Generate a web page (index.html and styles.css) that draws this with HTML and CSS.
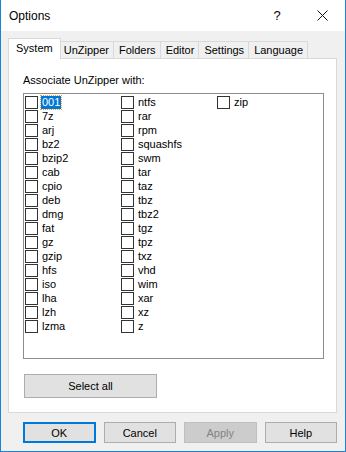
FILE: index.html
```html
<!DOCTYPE html>
<html lang="en">
<head>
    <meta charset="UTF-8">
    <title>Options</title>
    <link rel="stylesheet" href="styles.css">
</head>
<body>
    <div class="window">
        <div class="titlebar">
            <span class="title">Options</span>
            <span class="help-btn">?</span>
            <span class="close-btn">
                <svg width="11" height="11" viewBox="0 0 11 11"><path d="M0.5 0.5 L10.5 10.5 M10.5 0.5 L0.5 10.5" stroke="#111" stroke-width="1" fill="none"/></svg>
            </span>
        </div>

        <div class="content">
            <div class="tabs">
                <div class="tab active">System</div>
                <div class="tab">UnZipper</div>
                <div class="tab">Folders</div>
                <div class="tab">Editor</div>
                <div class="tab">Settings</div>
                <div class="tab">Language</div>
            </div>

            <div class="panel">
                <div class="label">Associate UnZipper with:</div>
                <div class="listbox">
                    <div class="list-grid" id="listGrid"></div>
                </div>
                <button class="btn select-all">Select all</button>
            </div>

            <div class="dialog-buttons">
                <button class="btn default">OK</button>
                <button class="btn">Cancel</button>
                <button class="btn" disabled>Apply</button>
                <button class="btn">Help</button>
            </div>
        </div>
    </div>

    <script>
        const types = ["001", "7z", "arj", "bz2", "bzip2", "cab", "cpio", "deb", "dmg", "fat", "gz", "gzip", "hfs", "iso", "lha", "lzh", "lzma",
            "ntfs", "rar", "rpm", "squashfs", "swm", "tar", "taz", "tbz", "tbz2", "tgz", "tpz", "txz", "vhd", "wim", "xar", "xz", "z",
            "zip"];
        const listGrid = document.getElementById("listGrid");

        types.forEach((name, index) => {
            const row = document.createElement("div");
            row.className = "item";
            row.innerHTML = `<span class="check"></span><span class="name${index === 0 ? " selected" : ""}">${name}</span>`;
            listGrid.appendChild(row);
        });
    </script>
</body>
</html>
```

FILE: styles.css
```css
body {
    margin: 0;
    font-family: "Liberation Sans", Arial, sans-serif;
    font-size: 11px;
    color: #000;
    background: #fff;
}

.window {
    width: 346px;
    height: 452px;
    box-sizing: border-box;
    border: 1px solid #1883d7;
    border-top: none;
    background: #f0f0f0;
    display: flex;
    flex-direction: column;
}

.titlebar {
    height: 31px;
    background: #ffffff;
    display: flex;
    align-items: center;
    padding-left: 8px;
    flex-shrink: 0;
}

.title {
    font-size: 12px;
    flex: 1;
}

.help-btn {
    font-size: 13px;
    width: 46px;
    text-align: center;
    margin-right: -1px;
}

.close-btn {
    width: 46px;
    display: flex;
    justify-content: center;
    align-items: center;
}

.content {
    padding: 7px 8px 0 7px;
}

.tabs {
    display: flex;
    align-items: flex-end;
    height: 20px;
    padding-left: 2px;
}

.tab {
    height: 17px;
    line-height: 16px;
    padding: 0 4px 0 5px;
    border: 1px solid #d9d9d9;
    border-bottom: none;
    margin-left: -1px;
    box-sizing: border-box;
    background: #f0f0f0;
    position: relative;
}

.tab.active {
    height: 21px;
    line-height: 18px;
    margin: 0 -2px -1px -2px;
    padding: 0 7px;
    background: #ffffff;
    z-index: 1;
}

.panel {
    height: 355px;
    box-sizing: border-box;
    border: 1px solid #d9d9d9;
    background: #ffffff;
    padding: 15px 0 0 14px;
}

.label {
    line-height: 13px;
    margin-bottom: 6px;
}

.listbox {
    width: 301px;
    height: 266px;
    box-sizing: border-box;
    border: 1px solid #8c8c8c;
    padding: 2px 1px;
}

.list-grid {
    display: grid;
    grid-auto-flow: column;
    grid-template-rows: repeat(17, 14px);
    grid-template-columns: repeat(3, 96px);
}

.item {
    display: flex;
    align-items: flex-start;
    height: 14px;
}

.check {
    width: 13px;
    height: 13px;
    box-sizing: border-box;
    border: 1px solid #333333;
    background: #ffffff;
    flex-shrink: 0;
}

.name {
    margin-left: 3px;
    padding: 0 1px;
    line-height: 13px;
    height: 13px;
}

.name.selected {
    background: #0078d7;
    color: #ffffff;
    outline: 1px dotted #e8a040;
}

.btn {
    font-family: inherit;
    font-size: 11px;
    color: #000;
    background: #e1e1e1;
    border: 1px solid #adadad;
    padding: 0;
    box-sizing: border-box;
}

.select-all {
    width: 133px;
    height: 24px;
    margin: 15px 0 0 1px;
}

.dialog-buttons {
    display: flex;
    gap: 8px;
    margin: 9px 0 0 15px;
}

.dialog-buttons .btn {
    width: 73px;
    height: 21px;
}

.btn.default {
    border: 2px solid #0078d7;
}

.btn:disabled {
    background: #cccccc;
    border-color: #bfbfbf;
    color: #838383;
}
```
